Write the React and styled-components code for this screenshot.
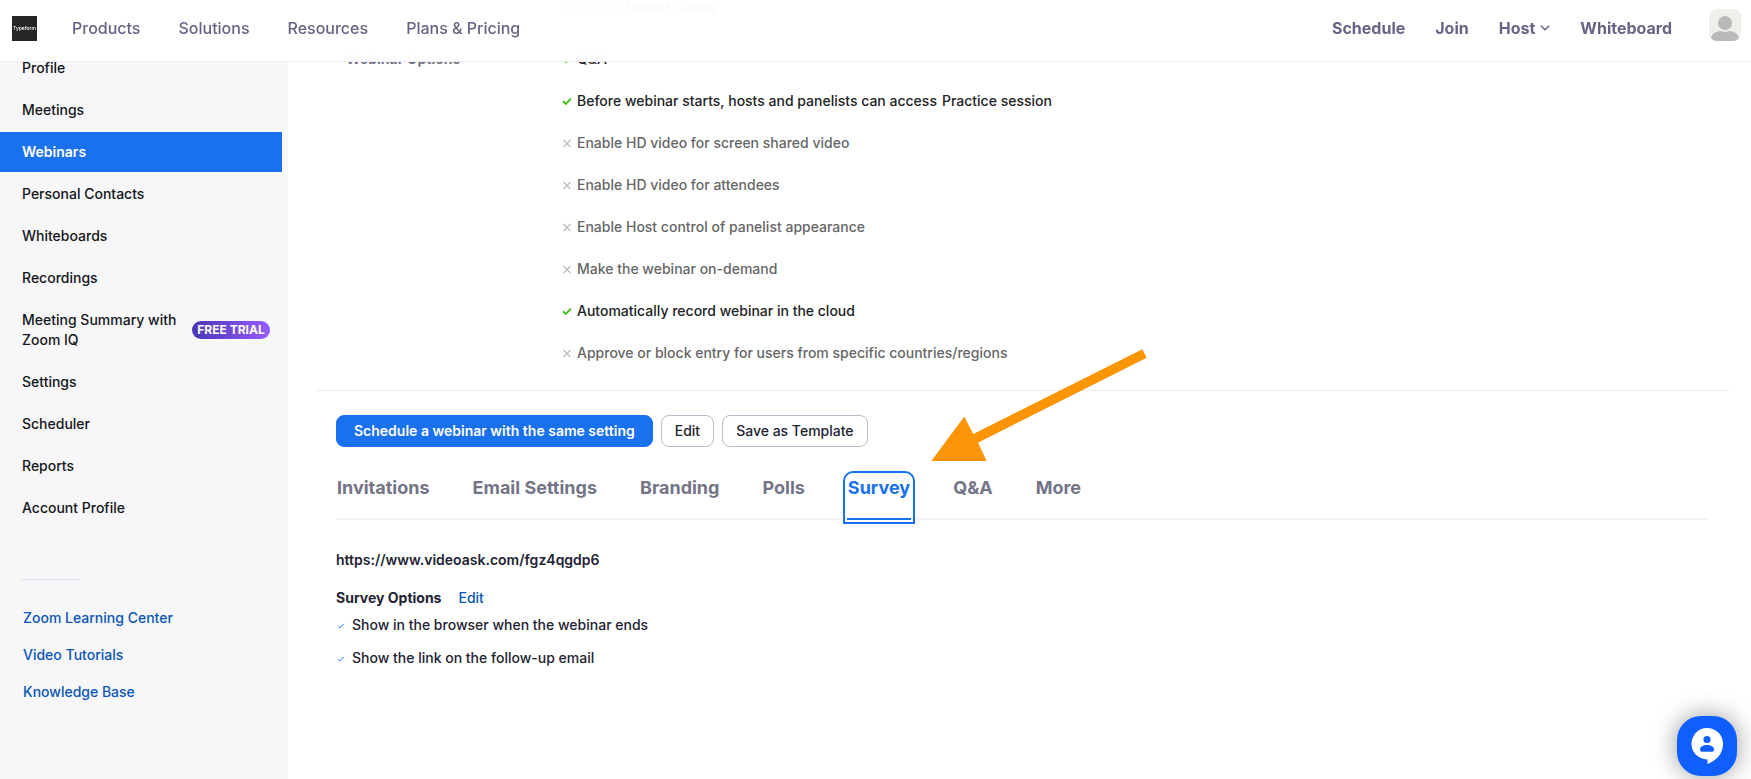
import React from "react";
import styled, { createGlobalStyle, css } from "styled-components";

const GlobalStyle = createGlobalStyle`
  *, *::before, *::after { box-sizing: border-box; }
  body {
    margin: 0;
    background: #fff;
    color: #232333;
    font-family: Inter, "Liberation Sans", sans-serif;
    font-size: 14px;
    font-weight: 500;
    line-height: 20px;
  }
  a { text-decoration: none; color: inherit; }
  button { font: inherit; cursor: pointer; }
  ul { list-style: none; margin: 0; padding: 0; }
`;

const TopBar = styled.header`
  position: fixed;
  inset: 0 0 auto;
  z-index: 2;
  display: flex;
  align-items: flex-start;
  justify-content: space-between;
  height: 62px;
  padding: 9px 10px 0 12px;
  background: rgba(255, 255, 255, 0.98);
  border-bottom: 1px solid #ededf2;
`;

const NavGroup = styled.nav`
  display: flex;
  align-items: center;
  gap: ${(p) => p.$gap}px;
  height: 38px;
  font-size: 16px;
  font-weight: ${(p) => (p.$strong ? 700 : 500)};
  color: #666484;
`;

const BarSide = styled.div`
  display: flex;
  align-items: ${(p) => (p.$top ? "flex-start" : "center")};
  gap: ${(p) => p.$gap}px;
`;

const Logo = styled.a`
  display: grid;
  place-items: center;
  width: 25px;
  height: 25px;
  background: #262627;
  color: #fff;
  font-size: 5px;
  font-weight: 500;
  line-height: 8px;
`;

const HostLink = styled.a`
  display: flex;
  align-items: center;
  gap: 5px;
`;

const AvatarButton = styled.button`
  width: 32px;
  height: 32px;
  padding: 0;
  border: 0;
  border-radius: 8px;
  overflow: hidden;
  background: #f0f0eb;
  svg { display: block; }
`;

const Page = styled.div`
  display: flex;
  min-height: 100vh;
`;

const Sidebar = styled.aside`
  flex: 0 0 288px;
  padding: 48px 6px 24px 0;
  background: #f7f7fa;
`;

const SideList = styled.ul`
  display: flex;
  flex-direction: column;
  gap: 2px;
`;

const SideLink = styled.a`
  display: flex;
  align-items: center;
  justify-content: space-between;
  padding: 10px 12px 10px 22px;
  color: #131619;
  ${(p) =>
    p.$active &&
    css`
      background: #1a71ee;
      color: #fff;
      font-weight: 600;
    `}
`;

const SideLabel = styled.span`
  max-width: 164px;
`;

const TrialBadge = styled.span`
  flex: none;
  width: 78px;
  border-radius: 9px;
  background: linear-gradient(90deg, #4b36b4, #965cff);
  color: #fff;
  font-size: 12px;
  font-weight: 700;
  line-height: 18px;
  text-align: center;
`;

const SideRule = styled.hr`
  width: 60px;
  height: 1px;
  margin: 51px 0 28px 21px;
  border: 0;
  background: #dfdfe6;
`;

const HelpList = styled.ul`
  display: flex;
  flex-direction: column;
  gap: 17px;
  padding-left: 23px;
  color: #0956b5;
`;

const Main = styled.main`
  flex: 1;
  min-width: 0;
  padding: 0 22px 24px 28px;
`;

const Details = styled.section`
  display: grid;
  grid-template-columns: 216px 1fr;
  row-gap: 22px;
  padding: 0 20px 16px 30px;
  border-bottom: 1px solid #ededf0;
`;

const DialRow = styled.p`
  grid-column: 2;
  margin: 0;
  font-weight: 400;
  line-height: 16px;
`;

const DetailLabel = styled.h2`
  margin: 0;
  color: #747487;
  font-size: 14px;
  font-weight: 700;
  line-height: 42px;
`;

const OptionRow = styled.li`
  display: flex;
  align-items: center;
  gap: 5px;
  height: 42px;
  color: ${(p) => (p.$on ? "#222325" : "#666")};
  svg { flex: none; }
`;

const Body = styled.div`
  padding: 24px 20px 0;
`;

const ButtonRow = styled.div`
  display: flex;
  gap: 8px;
`;

const Button = styled.button`
  height: 32px;
  padding: 0 ${(p) => (p.$primary ? 17 : 13)}px;
  border: 1px solid ${(p) => (p.$primary ? "#1a71ee" : "#babacc")};
  border-radius: 8px;
  background: ${(p) => (p.$primary ? "#1a71ee" : "#fff")};
  color: ${(p) => (p.$primary ? "#fff" : "#222230")};
  font-weight: ${(p) => (p.$primary ? 600 : 500)};
`;

const TabArea = styled.div`
  position: relative;
`;

const Tabs = styled.div`
  display: flex;
  gap: 41px;
  margin-top: 28px;
  border-bottom: 2px solid #f4f4f7;
`;

const Tab = styled.button`
  height: 45px;
  margin-bottom: -2px;
  padding: 0 1px 18px;
  border: 0;
  border-bottom: 2px solid transparent;
  background: none;
  color: #747487;
  font-size: 18px;
  font-weight: 700;
  line-height: 25px;
  ${(p) =>
    p.$active &&
    css`
      border-radius: 6px 6px 0 0;
      border-bottom-color: #1a71ee;
      color: #1a71ee;
      outline: 2px solid #1a71ee;
      outline-offset: 2px;
    `}
`;

const Pointer = styled.svg`
  position: absolute;
  left: 594px;
  top: -127px;
  pointer-events: none;
`;

const SurveyUrl = styled.p`
  margin: 30px 0 18px;
  font-weight: 600;
`;

const SurveyHead = styled.div`
  display: flex;
  gap: 17px;
  margin-bottom: 7px;
  a { color: #0956b5; }
`;

const SurveyTitle = styled.h3`
  margin: 0;
  font-size: 14px;
  font-weight: 700;
`;

const SurveyList = styled.ul`
  display: flex;
  flex-direction: column;
  gap: 13px;
  li {
    display: flex;
    align-items: center;
    gap: 7px;
  }
`;

const ChatButton = styled.button`
  position: fixed;
  right: 14px;
  bottom: 3px;
  z-index: 3;
  width: 60px;
  height: 60px;
  padding: 0;
  border: 0;
  border-radius: 24px;
  background: #0f5fff;
  box-shadow: 0 0 24px rgba(0, 0, 0, 0.4);
  svg { display: block; }
`;

const CheckIcon = () => (
  <svg width="10" height="10" viewBox="0 0 10 10" fill="none" aria-hidden="true">
    <path d="M1 5.3 3.8 8 9 2.6" stroke="#3fc01a" strokeWidth="1.9" />
  </svg>
);

const CrossIcon = () => (
  <svg width="10" height="10" viewBox="0 0 10 10" fill="none" aria-hidden="true">
    <path d="m1.5 2 7 7m0-7-7 7" stroke="#bcbcbc" strokeWidth="1.2" />
  </svg>
);

const TickIcon = () => (
  <svg width="9" height="9" viewBox="0 0 9 9" fill="none" aria-hidden="true">
    <path d="M2 5.2 3.8 7 7.8 2.8" stroke="#2f80f5" strokeWidth="1" />
  </svg>
);

const products = ["Products", "Solutions", "Resources", "Plans & Pricing"];

const sideItems = [
  { label: "Profile" },
  { label: "Meetings" },
  { label: "Webinars", active: true },
  { label: "Personal Contacts" },
  { label: "Whiteboards" },
  { label: "Recordings" },
  { label: "Meeting Summary with Zoom IQ", badge: "FREE TRIAL" },
  { label: "Settings" },
  { label: "Scheduler" },
  { label: "Reports" },
  { label: "Account Profile" },
];

const helpItems = ["Zoom Learning Center", "Video Tutorials", "Knowledge Base"];

const options = [
  { on: true, text: "Q&A" },
  { on: true, text: "Before webinar starts, hosts and panelists can access", link: "Practice session" },
  { text: "Enable HD video for screen shared video" },
  { text: "Enable HD video for attendees" },
  { text: "Enable Host control of panelist appearance" },
  { text: "Make the webinar on-demand" },
  { on: true, text: "Automatically record webinar in the cloud" },
  { text: "Approve or block entry for users from specific countries/regions" },
];

const tabs = ["Invitations", "Email Settings", "Branding", "Polls", "Survey", "Q&A", "More"];

export default function App() {
  return (
    <>
      <GlobalStyle />
      <TopBar>
        <BarSide $gap={35}>
          <Logo href="#home">Typeform</Logo>
          <NavGroup $gap={38} aria-label="Site">
            {products.map((name) => (
              <a key={name} href="#nav">{name}</a>
            ))}
          </NavGroup>
        </BarSide>
        <BarSide $gap={37} $top>
          <NavGroup $gap={30} $strong aria-label="Account">
            <a href="#schedule">Schedule</a>
            <a href="#join">Join</a>
            <HostLink href="#host">
              Host
              <svg width="10" height="6" viewBox="0 0 10 6" fill="none" aria-hidden="true">
                <path d="m.8.8 4.2 4 4.2-4" stroke="#666484" strokeWidth="1.5" />
              </svg>
            </HostLink>
            <a href="#whiteboard">Whiteboard</a>
          </NavGroup>
          <AvatarButton aria-label="Account menu">
            <svg width="32" height="32" viewBox="0 0 32 32" aria-hidden="true">
              <circle cx="16" cy="14" r="7" fill="#b9b9b9" />
              <path d="M2 29c1-5 6-7 10-7 1.500 0 2.500 1 4 1s2.500-1 4-1c4 0 9 2 10 7 0 2-2 3-5 3H7c-3 0-5-1-5-3z" fill="#b9b9b9" />
            </svg>
          </AvatarButton>
        </BarSide>
      </TopBar>

      <Page>
        <Sidebar>
          <nav aria-label="Account sections">
            <SideList>
              {sideItems.map((item) => (
                <li key={item.label}>
                  <SideLink href="#section" $active={item.active}>
                    <SideLabel>{item.label}</SideLabel>
                    {item.badge && <TrialBadge>{item.badge}</TrialBadge>}
                  </SideLink>
                </li>
              ))}
            </SideList>
          </nav>
          <SideRule />
          <HelpList>
            {helpItems.map((name) => (
              <li key={name}><a href="#help">{name}</a></li>
            ))}
          </HelpList>
        </Sidebar>

        <Main>
          <Details>
            <DialRow>Dial from <b>United States</b></DialRow>
            <DetailLabel>Webinar Options</DetailLabel>
            <ul>
              {options.map((o) => (
                <OptionRow key={o.text} $on={o.on}>
                  {o.on ? <CheckIcon /> : <CrossIcon />}
                  <span>{o.text}</span>
                  {o.link && <span>{o.link}</span>}
                </OptionRow>
              ))}
            </ul>
          </Details>

          <Body>
            <ButtonRow>
              <Button $primary>Schedule a webinar with the same setting</Button>
              <Button>Edit</Button>
              <Button>Save as Template</Button>
            </ButtonRow>

            <TabArea>
              <Tabs role="tablist">
                {tabs.map((name) => (
                  <Tab key={name} role="tab" aria-selected={name === "Survey"} $active={name === "Survey"}>
                    {name}
                  </Tab>
                ))}
              </Tabs>
              <Pointer width="218" height="114" viewBox="0 0 218 114" aria-hidden="true">
                <path d="M1.300 113 34.300 68.500 43.300 86 212.300 1.300 216.700 9.700 48 94.700 56.700 113z" fill="#fb9508" />
              </Pointer>
            </TabArea>

            <SurveyUrl>https://www.videoask.com/fgz4qgdp6</SurveyUrl>
            <SurveyHead>
              <SurveyTitle>Survey Options</SurveyTitle>
              <a href="#edit">Edit</a>
            </SurveyHead>
            <SurveyList>
              <li><TickIcon />Show in the browser when the webinar ends</li>
              <li><TickIcon />Show the link on the follow-up email</li>
            </SurveyList>
          </Body>
        </Main>
      </Page>

      <ChatButton aria-label="Open chat">
        <svg width="60" height="60" viewBox="0 0 60 60" aria-hidden="true">
          <path d="M30 12c9 0 16 7 16 15.500C46 38 40 44 30.500 48v-4.500C21 43 14.500 36.500 14.500 28S21 12 30 12z" fill="#fff" />
          <circle cx="30" cy="23.500" r="3.600" fill="#0f5fff" />
          <path d="M23 33.500c0-3 3-4.500 7-4.500s7 1.500 7 4.500c0 1.500-1 2.300-2.500 2.300h-9c-1.500 0-2.500-.8-2.500-2.300z" fill="#0f5fff" />
        </svg>
      </ChatButton>
    </>
  );
}
